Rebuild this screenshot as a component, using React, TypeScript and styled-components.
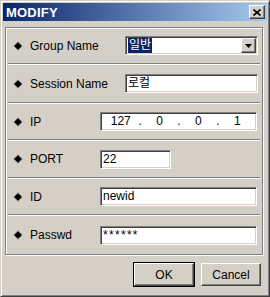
import React from 'react';
import styled, {createGlobalStyle} from 'styled-components';

const GlobalStyle = createGlobalStyle`
  body {
    margin: 0;
    background: #D4D0C8;
  }
`;

const Window = styled.div`
  box-sizing: border-box;
  width: 270px;
  height: 297px;
  background: #D4D0C8;
  border: 1px solid;
  border-color: #D4D0C8 #404040 #404040 #D4D0C8;
  box-shadow: inset 1px 1px #fff, inset -1px -1px #808080;
  padding: 2px;
  display: flex;
  flex-direction: column;
  font-family: "Liberation Sans", "Noto Sans CJK KR", sans-serif;
  font-size: 12px;
  color: #000;
`;

const TitleBar = styled.div`
  height: 18px;
  display: flex;
  align-items: center;
  justify-content: space-between;
  padding: 0 2px 0 3px;
  background: linear-gradient(to right, #0A246A, #A6CAF0);
`;

const Title = styled.span`
  color: #fff;
  font-weight: bold;
  font-size: 13px;
  letter-spacing: 0.2px;
`;

const Bevel = styled.div`
  box-sizing: border-box;
  background: #D4D0C8;
  border: 1px solid;
  border-color: #fff #404040 #404040 #fff;
  box-shadow: inset -1px -1px #808080;
  display: flex;
  align-items: center;
  justify-content: center;
`;

const CloseButton = styled(Bevel)`
  width: 16px;
  height: 14px;
`;

const GroupBox = styled.div`
  margin: 6px 4px 0 2px;
  border: 1px solid #808080;
  box-shadow: inset 1px 1px #fff, 1px 1px #fff;
  display: flex;
  flex-direction: column;
`;

const Row = styled.div<{ $h: number }>`
  height: ${p => p.$h}px;
  display: flex;
  align-items: center;
  padding-left: 7px;
`;

const Separator = styled.div`
  height: 1px;
  margin: 0 2px;
  background: #808080;
  border-bottom: 1px solid #fff;
`;

const Label = styled.div<{ $w: number }>`
  width: ${p => p.$w}px;
  display: flex;
  align-items: center;
  gap: 7px;
`;

const Field = styled.div<{ $w: number }>`
  box-sizing: border-box;
  width: ${p => p.$w}px;
  height: 19px;
  background: #fff;
  border: 1px solid;
  border-color: #808080 #fff #fff #808080;
  box-shadow: inset 1px 1px #404040, inset -1px -1px #D4D0C8;
  padding: 1px 1px 1px 2px;
  display: flex;
  align-items: center;
  line-height: 15px;
  white-space: nowrap;
`;

const Selected = styled.span`
  background: #0A246A;
  color: #fff;
  padding: 0 1px;
  flex: none;
`;

const DropButton = styled(Bevel)`
  width: 15px;
  height: 15px;
  margin-left: auto;
`;

const IpSegment = styled.span`
  flex: 1;
  text-align: center;
`;

const IpDot = styled.span`
  flex: none;
`;

const Password = styled.span`
  letter-spacing: 1.3px;
`;

const ButtonRow = styled.div`
  display: flex;
  justify-content: flex-end;
  gap: 7px;
  margin-top: 8px;
  padding-right: 6px;
`;

const Button = styled(Bevel)<{ $default?: boolean }>`
  width: 60px;
  height: 23px;
  font-size: 12px;
  ${p => p.$default && `
    outline: 1px solid #000;
    outline-offset: 0;
  `}
`;

function Diamond() {
  return (
    <svg width="10" height="10" viewBox="0 0 10 10">
      <polygon points="5,0.2 9.8,5 5,9.8 0.2,5" fill="#9a9893" />
      <polygon points="5,1.2 8.8,5 5,8.8 1.2,5" fill="#000" />
    </svg>
  );
}

const rows = [
  {label: 'Group Name', w: 112, h: 35},
  {label: 'Session Name', w: 112, h: 37},
  {label: 'IP', w: 87, h: 35},
  {label: 'PORT', w: 87, h: 36},
  {label: 'ID', w: 87, h: 35},
  {label: 'Passwd', w: 87, h: 38},
];

function renderField(label: string) {
  switch (label) {
    case 'Group Name':
      return (
        <Field $w={133}>
          <Selected>일반</Selected>
          <DropButton>
            <svg width="7" height="4" viewBox="0 0 7 4"><polygon points="0,0 7,0 3.5,4" fill="#000" /></svg>
          </DropButton>
        </Field>
      );
    case 'Session Name':
      return <Field $w={133}>로컬</Field>;
    case 'IP':
      return (
        <Field $w={157}>
          <IpSegment>127</IpSegment><IpDot>.</IpDot>
          <IpSegment>0</IpSegment><IpDot>.</IpDot>
          <IpSegment>0</IpSegment><IpDot>.</IpDot>
          <IpSegment>1</IpSegment>
        </Field>
      );
    case 'PORT':
      return <Field $w={71}>22</Field>;
    case 'ID':
      return <Field $w={157}>newid</Field>;
    default:
      return <Field $w={157}><Password>******</Password></Field>;
  }
}

export default function App() {
  return (
    <>
      <GlobalStyle />
      <Window>
        <TitleBar>
          <Title>MODIFY</Title>
          <CloseButton>
            <svg width="8" height="7" viewBox="0 0 8 7">
              <path d="M0.5 0.5 L7.5 6.5 M7.5 0.5 L0.5 6.5" stroke="#000" strokeWidth="1.6" />
            </svg>
          </CloseButton>
        </TitleBar>
        <GroupBox>
          {rows.map((r, i) => (
            <React.Fragment key={r.label}>
              {i > 0 && <Separator />}
              <Row $h={r.h}>
                <Label $w={r.w}><Diamond />{r.label}</Label>
                {renderField(r.label)}
              </Row>
            </React.Fragment>
          ))}
        </GroupBox>
        <ButtonRow>
          <Button $default>OK</Button>
          <Button>Cancel</Button>
        </ButtonRow>
      </Window>
    </>
  );
}
